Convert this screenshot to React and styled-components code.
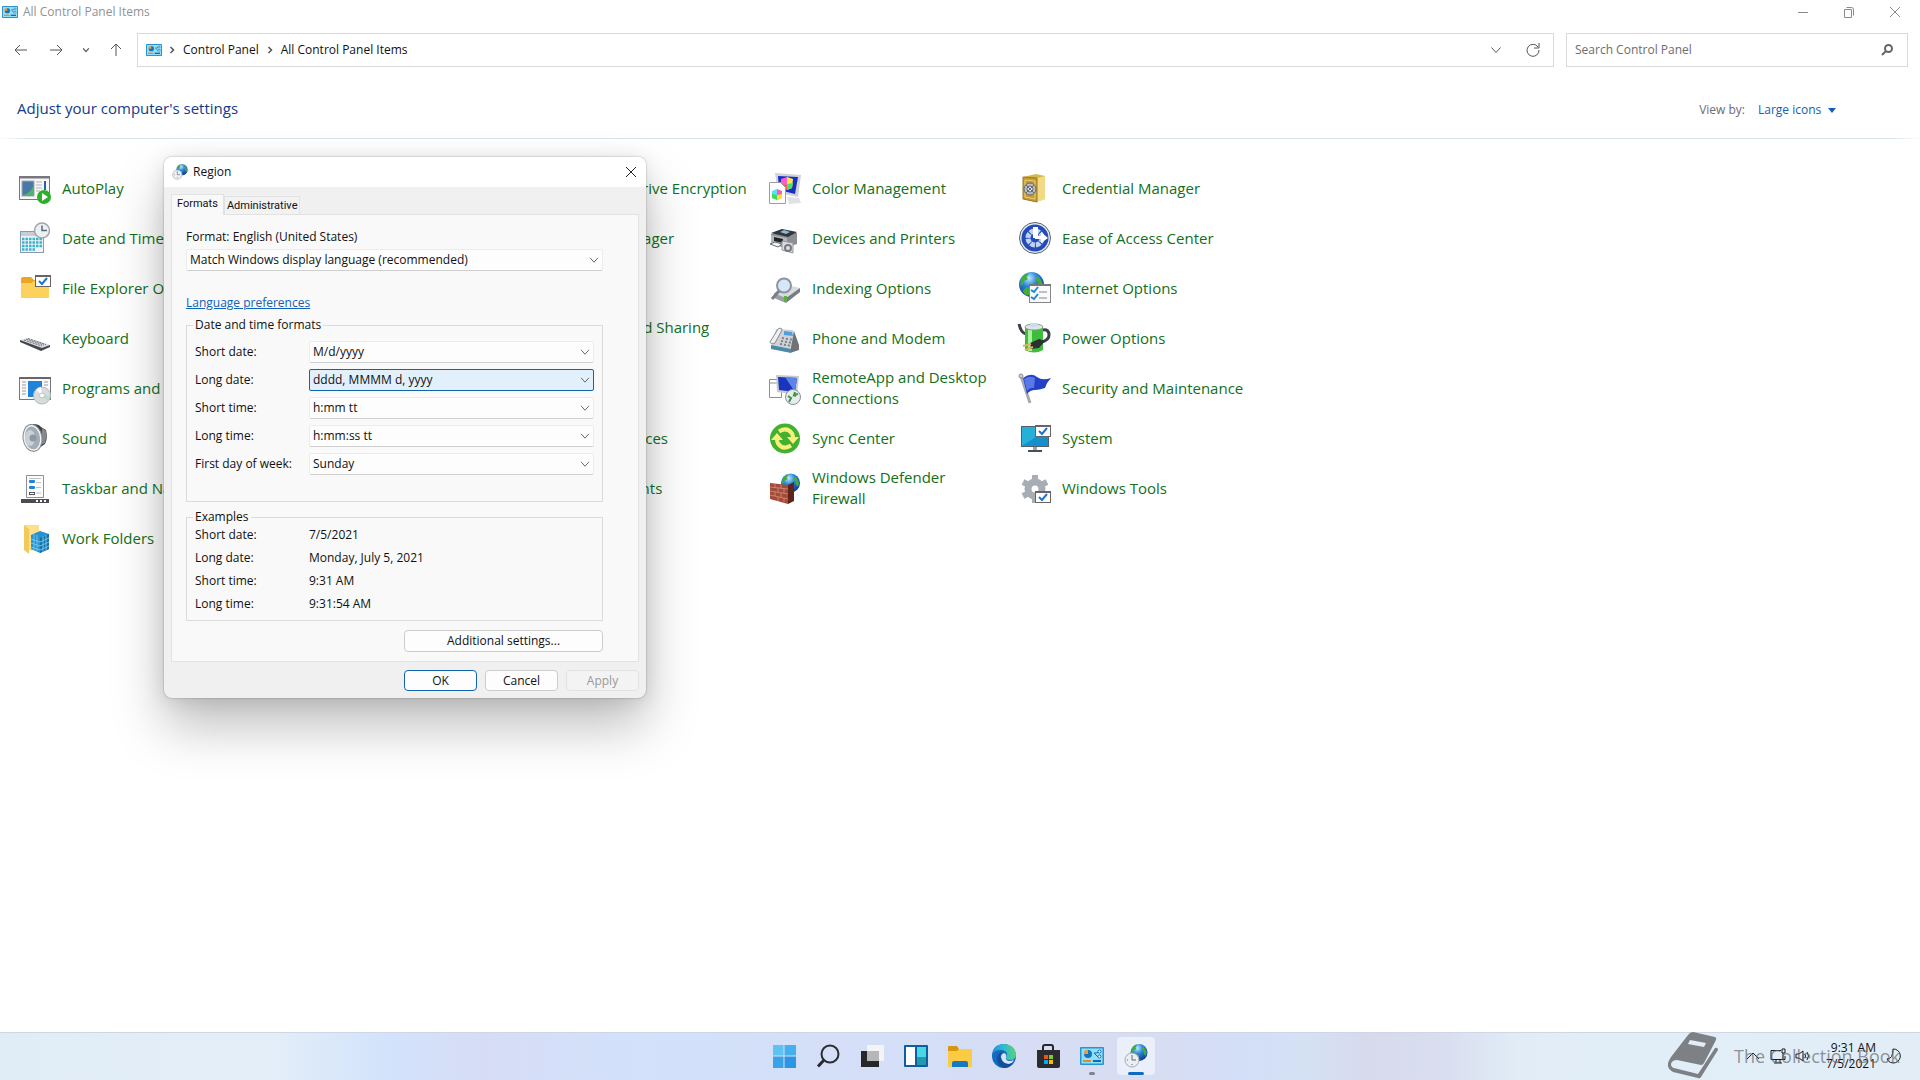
import { useState } from "react";
import styled, { createGlobalStyle, css } from "styled-components";

const GlobalStyle = createGlobalStyle`
  * {
    box-sizing: border-box;
  }

  body {
    margin: 0;
    background: #ffffff;
    color: #111111;
    font-family: "Open Sans", "Noto Sans", sans-serif;
    font-size: 12px;
    line-height: 16px;
  }

  button,
  input,
  select {
    font: inherit;
    color: inherit;
  }

  svg {
    display: block;
    flex-shrink: 0;
    overflow: visible;
  }
`;

/* ---------- small shared drawings ---------- */

function Stroke({ size = 16, width = 1, color = "#555555", d }) {
  return (
    <svg width={size} height={size} viewBox="0 0 16 16" aria-hidden="true">
      <path d={d} fill="none" stroke={color} strokeWidth={width} />
    </svg>
  );
}

const CHEVRON = "M3.500 5.500l4.500 5 4.500-5";
const CROSS = "M3 3l10 10M13 3L3 13";

function CheckCard({ x, y }) {
  return (
    <g transform={`translate(${x} ${y})`}>
      <rect x=".5" y=".5" width="15" height="11" fill="#fff" stroke="#6a6265" />
      <path d="M0 1h16" stroke="#6a6265" strokeWidth="2" />
      <path d="M4 6l3 3 5-6" fill="none" stroke="#1976d2" strokeWidth="2" />
    </g>
  );
}

function Globe({ cx, cy, r }) {
  return (
    <g>
      <defs>
        <radialGradient id={`globe${cx}`} cx=".4" cy=".25" r=".8">
          <stop offset="0" stopColor="#b9ecff" />
          <stop offset=".4" stopColor="#2f86d8" />
          <stop offset="1" stopColor="#0a2f8f" />
        </radialGradient>
      </defs>
      <circle cx={cx} cy={cy} r={r} fill={`url(#globe${cx})`} />
      <g transform={`translate(${cx - r} ${cy - r}) scale(${r / 10})`}>
        <path
          d="M2 5q2-4 6-4l-2 3 1 2-3 1-1 3-2 1zM15 3q3 3 4 7l-1 4-2-2-1-4-2-2zM6 12l4 1-1 4-2 2q-3-1-4-4z"
          fill="#43ad3c"
        />
      </g>
    </g>
  );
}

function ControlPanelIcon({ size = 16 }) {
  return (
    <svg width={size} height={size} viewBox="0 0 24 24" aria-hidden="true">
      <rect x="0" y="3" width="24" height="18" rx="1" fill="#2a93d1" />
      <rect x="1.5" y="4.5" width="21" height="15" fill="#8fe0fb" />
      <circle cx="8" cy="10" r="4" fill="#1773bd" />
      <path d="M8 10V5.500a4.500 4.500 0 0 0-4.500 4.500z" fill="#f39a35" />
      <path d="M14 9h3l2-2M14 9l4 4" fill="none" stroke="#1769ad" />
      <circle cx="19.500" cy="7.500" r="1.500" fill="#fff" stroke="#1769ad" />
      <circle cx="19.500" cy="12.500" r="1.500" fill="#fff" stroke="#1769ad" />
      <path d="M3 17h8" stroke="#e38b2b" strokeWidth="2" />
      <path d="M13 17h8" stroke="#1769ad" strokeWidth="2" />
    </svg>
  );
}

function RegionIcon({ size = 16 }) {
  return (
    <svg width={size} height={size} viewBox="0 0 24 24" aria-hidden="true">
      <Globe cx={15} cy={8.5} r={8.5} />
      <circle cx="8" cy="16" r="7" fill="#eceff2" stroke="#a4abb3" />
      <path d="M8 11v5h4M8 21v-1M3 16h1" fill="none" stroke="#5a6c80" />
    </svg>
  );
}

/* ---------- 32px item icons ---------- */

const ICONS = {
  autoplay: (
    <>
      <rect x=".5" y="4.500" width="30" height="23" fill="#f7f7f7" stroke="#77777d" />
      <path d="M1 5.500h29" stroke="#77777d" strokeWidth="2" />
      <rect x="3" y="9" width="12" height="15" fill="#4a79a8" stroke="#a3abb5" />
      <path d="M4 23q8-2 10-9v9z" fill="#53b36c" />
      <path d="M17 10h6M17 13h6M17 16h6M17 19h4" stroke="#b3b3b8" />
      <path d="M26 9v9" stroke="#285fae" strokeWidth="2" />
      <circle cx="25" cy="25" r="7" fill="#2fae2b" />
      <path d="M23 21v8l6-4z" fill="#fff" />
    </>
  ),
  datetime: (
    <>
      <rect x="1.500" y="9.500" width="23" height="21" fill="#eef4f7" stroke="#8a9aa8" />
      <rect x="2" y="10" width="22" height="4" fill="#c3ced6" />
      <path
        d="M3 17h20M3 20.500h20M3 24h20M3 27.500h14"
        stroke="#38b4cf"
        strokeWidth="2.500"
        strokeDasharray="2.500 1"
      />
      <circle cx="23" cy="8.500" r="7.500" fill="#edf0f2" stroke="#a0a6ac" strokeWidth="1.500" />
      <path d="M23 3.500v5h5" fill="none" stroke="#586b7d" strokeWidth="1.500" />
    </>
  ),
  folder: (
    <g transform="translate(0 3)">
      <path d="M2 4q0-2 2-2h8l3 3h13v10H2z" fill="#eaa622" />
      <path d="M2 8h10l3-2h15v16q0 1-1 1H3q-1 0-1-1z" fill="#fdd25c" />
      <CheckCard x={16} y={0} />
    </g>
  ),
  keyboard: (
    <g transform="translate(0 3)">
      <path d="M1 15l8-2 22 7-8 4z" fill="#d6d9dd" />
      <path d="M1 15l22 8 8-3v2l-9 4-21-9z" fill="#44474c" />
      <path
        d="M5 15l18 6M7 14l18 6M9 13.500l18 6"
        stroke="#6f747b"
        strokeDasharray="2 1"
      />
    </g>
  ),
  programs: (
    <>
      <rect x=".5" y="5.500" width="31" height="22" fill="#fafafa" stroke="#77777d" />
      <path d="M0 6h32" stroke="#66666c" strokeWidth="2" />
      <path d="M3 10h4M3 13h4M3 16h4M3 19h4M3 22h4M25 10h4M25 13h4" stroke="#9a9aa0" />
      <rect x="9" y="9" width="14" height="16" fill="#1f83d8" />
      <circle cx="23" cy="23.500" r="8.500" fill="#d8dcdf" stroke="#b4b9be" />
      <path d="M23 23l-6-5a8 8 0 0 1 5-3z" fill="#fff" />
      <path d="M23 23l5 6a8 8 0 0 0 3-5z" fill="#b9dcc9" />
      <circle cx="23" cy="23.500" r="2.500" fill="#fff" stroke="#bcc0c4" />
    </>
  ),
  sound: (
    <>
      <path d="M14 2q6 0 8 3l5 3q2 8-1 14l-6 4-6 4z" fill="#3f4144" />
      <path d="M23 6l4 3q1 6-1 12l-4 2z" fill="#85888c" />
      <ellipse cx="13.500" cy="16" rx="9.500" ry="13.500" fill="#f1f2f3" stroke="#85898e" transform="rotate(-8 13 16)" />
      <ellipse cx="13.500" cy="16" rx="7.500" ry="11.500" fill="#a3adb6" transform="rotate(-8 13 16)" />
      <ellipse cx="11" cy="16" rx="5" ry="8" fill="#c9d0d6" />
      <circle cx="14" cy="16" r="3.500" fill="#8c98a3" />
    </>
  ),
  taskbar: (
    <g transform="translate(0 3)">
      <path d="M7.500.5h17v22h-17z" fill="#fcfcfc" stroke="#8e8e94" />
      <path d="M10 3.500h12M17 7.500h5M17 12.500h5M17 18h5" stroke="#c2c2c6" />
      <rect x="10" y="5" width="6" height="3" rx="1" fill="#1f83d8" />
      <rect x="10" y="11" width="6" height="3" rx="1" fill="#1f83d8" />
      <rect x="10.500" y="17.500" width="5" height="2" fill="none" stroke="#55555a" />
      <path d="M2 24h28v4H2z" fill="#4c4c55" />
      <path d="M17 26h2M21 26h2M25 26h2" stroke="#fff" strokeWidth="2" />
    </g>
  ),
  work: (
    <g transform="translate(0 2)">
      <path d="M5 1h15v9l-6 17-9-2z" fill="#ffe08a" />
      <path d="M5 1l5 4v25l-5-4z" fill="#f4c95c" />
      <path d="M12 11l9-4 9 3v15l-9 4-9-4z" fill="#2892cf" />
      <path d="M21 14l9-4v15l-9 4z" fill="#1670a8" />
      <path
        d="M12 15l9 3 9-4M12 19l9 3 9-4M12 23l9 3 9-4M15 10v16M18 11v16M24 12v16M27 11v15"
        fill="none"
        stroke="#6fc3ea"
      />
    </g>
  ),
  color: (
    <g transform="translate(0 1)">
      <path d="M6 0l26 2-3 22-20-4z" fill="#cfd3d8" />
      <path d="M9 3l20 1-3 17-16-4z" fill="#1a2fc0" />
      <path d="M18 24l12 1 2 5-12 1z" fill="#dfe1e4" />
      <path d="M12 6l6-2v12l-6-2z" fill="#ff5bd0" />
      <path d="M18 4l6 2-1 9-5 2z" fill="#ffe84a" />
      <path d="M12 11l6 1v5l-6-3z" fill="#ff5d3a" />
      <path d="M18 11l6-1-1 5-5 2z" fill="#4be06a" />
      <path d="M.5 9.500h11l5 5v16H.500z" fill="#fff" stroke="#9d9da3" />
      <path d="M3 18l5-2v11l-5-2z" fill="#56e0ff" />
      <path d="M8 16l5 2v7l-5 2z" fill="#ff5bb0" />
      <path d="M3 21l5 1v5l-5-2z" fill="#3ddc55" />
      <path d="M8 22l5-1v4l-5 2z" fill="#ffdd3b" />
    </g>
  ),
  printer: (
    <g transform="translate(0 1)">
      <path d="M2 11l12-4 14 3v11l-12 4-14-4z" fill="#8b8f94" />
      <path d="M2 10l11-4 15 3-9 5z" fill="#30363e" />
      <path d="M11 9l4-2 6 2-4 2z" fill="#8fbccd" />
      <path d="M2 12l16 3v8L2 20z" fill="#b3b6ba" />
      <path d="M5 14l9 2v4l-9-2z" fill="#202327" />
      <path d="M1 21l5-2 7 2-4 3z" fill="#f4f4f4" stroke="#6a6d71" />
      <path d="M13 18l11 2v10l-11-3z" fill="#dadcdf" stroke="#96999d" />
      <circle cx="19" cy="25" r="4" fill="#777b80" />
      <circle cx="19" cy="25" r="2" fill="#dcdfe2" />
    </g>
  ),
  indexing: (
    <g transform="translate(0 2)">
      <path d="M5 19l13-8 13 3-14 10z" fill="#d7dade" />
      <path d="M5 19l12 5v5L5 24z" fill="#9ba0a6" />
      <path d="M17 24l14-10v4L17 29z" fill="#777c82" />
      <path d="M15 22h3v6h-3z" fill="#58b23c" />
      <circle cx="15" cy="11.500" r="7" fill="#d5e8fb" stroke="#8d959e" strokeWidth="2" />
      <path d="M10 17L3 25" stroke="#7b8087" strokeWidth="3" />
    </g>
  ),
  phone: (
    <g transform="translate(0 1)">
      <path d="M7 6l17 1 6 16-8 6-20-4z" fill="#cfd3d7" />
      <path d="M25 8l5 14v5l-9 3z" fill="#6f7378" />
      <path d="M2 22l20 4v4L2 26z" fill="#4a8aa8" />
      <path d="M9 6q4-2 4 1L6 20q-4 2-5-1z" fill="#eef0f2" stroke="#84898f" />
      <path d="M15 8l8 1 1 4-9-1z" fill="#4f9fe0" />
      <path
        d="M13 15l12 2M12 18l12 2M11 21l12 2"
        stroke="#7d8289"
        strokeWidth="2"
        strokeDasharray="2 2"
      />
    </g>
  ),
  remote: (
    <g transform="translate(0 2)">
      <path d="M.5 5.500h12v18H.500z" fill="#fff" stroke="#8c9096" />
      <path d="M1 9h11" stroke="#8c9096" />
      <path d="M7 1l23 1-2 19-20-3z" fill="#c6cace" />
      <path d="M9 3l19 1-2 14-16-2z" fill="#1b34bd" />
      <path d="M16 3l12 1-2 14z" fill="#5d84e8" />
      <circle cx="24" cy="23" r="7.500" fill="#e9ecee" stroke="#8b9096" />
      <path
        d="M19 22l3 2-2 4M29 20l-4 1 1-3M24 21l3 1"
        fill="none"
        stroke="#3a9940"
        strokeWidth="2"
      />
    </g>
  ),
  sync: (
    <>
      <circle cx="16" cy="16.500" r="15" fill="#43b02f" />
      <path
        d="M10 9.500q8-5 13 2 1 2 1 4M22 23.500q-8 5-13-2-1-2-1-4"
        fill="none"
        stroke="#f7ee7c"
        strokeWidth="4"
      />
      <path d="M18 15h12l-6 7zM14 18H2l6-7z" fill="#f7ee7c" />
    </>
  ),
  firewall: (
    <g transform="translate(0 1)">
      <Globe cx={21.5} cy={10} r={9.5} />
      <path d="M1 10l18 2v19L1 26z" fill="#a34a38" />
      <path d="M19 12l6-3v19l-6 3z" fill="#612419" />
      <path
        d="M1 14l18 2M1 18l18 3M1 22l18 4M6 11v4M12 12v4M9 15v4M15 16v4M6 19v4M12 20v4M9 24v4M15 25v4"
        fill="none"
        stroke="#c98471"
      />
    </g>
  ),
  safe: (
    <>
      <path d="M4 5l13-3 9 2v23l-9 3-13-3z" fill="#d9b648" />
      <path d="M18 6l8-2v23l-8 3z" fill="#f1d985" />
      <path d="M4 5l14 1v24L4 27z" fill="#c49a33" stroke="#9d7a23" />
      <path d="M6 8l10 1v18l-10-2z" fill="none" stroke="#ecd078" />
      <circle cx="11" cy="17" r="6" fill="#b9bcc0" stroke="#66696d" />
      <circle cx="11" cy="17" r="3" fill="#e4e6e8" stroke="#66696d" />
      <path d="M7 13l8 8M15 13l-8 8" stroke="#66696d" />
    </>
  ),
  ease: (
    <>
      <circle cx="16" cy="16" r="15.500" fill="#e8ecf4" stroke="#59616f" />
      <circle cx="16" cy="16" r="13.500" fill="#234cb8" />
      <circle
        cx="16"
        cy="16"
        r="7"
        fill="none"
        stroke="#c3d3f7"
        strokeWidth="5"
        strokeDasharray="4.500 1"
      />
      <path d="M14 5h5v11h-5z" fill="#fff" />
      <path d="M16 14h6v-4l7 6-7 5v-4h-6z" fill="#fff" />
    </>
  ),
  internet: (
    <>
      <Globe cx={12.5} cy={12.5} r={12.5} />
      <rect x="10.500" y="12.500" width="21" height="18" fill="#fafafa" stroke="#86868c" />
      <path d="M10 13h22" stroke="#77777d" strokeWidth="2" />
      <path d="M12 18l3 2 4-5M12 25l3 2 4-5" fill="none" stroke="#1d87d6" strokeWidth="2" />
      <path d="M20 20h8M20 26h8" stroke="#86868c" />
    </>
  ),
  power: (
    <>
      <path d="M0 2q2 9 7 10M24 8q6-1 6 5 0 5-7 7" fill="none" stroke="#3c3f4a" strokeWidth="3" />
      <path d="M6 5h18v23q-9 5-18 0z" fill="#3ebd3c" />
      <path d="M9 6h4v23H9z" fill="#a9f09f" />
      <ellipse cx="15" cy="5" rx="9" ry="3" fill="#dfe6e4" stroke="#8d9a95" />
      <ellipse cx="15" cy="3" rx="4" ry="2" fill="#c6ddf0" />
      <path d="M11 21l9-4 6 2-6 7-8 1z" fill="#2d2f35" />
      <path d="M12 22l-8 2M14 25l-8 3" stroke="#d9b45c" strokeWidth="2" />
    </>
  ),
  flag: (
    <g transform="translate(0 1)">
      <path d="M2 3l9 27" stroke="#a7abb1" strokeWidth="3" />
      <circle cx="2" cy="3" r="2" fill="#d2d5d9" stroke="#85898f" />
      <path d="M4 5q8-6 14-1 5 4 14 1-4 4-6 10-6 2-10 2-5 0-8 4z" fill="#2440c4" />
      <path d="M5 6q6-4 11-1l-1 10q-4-1-7 3z" fill="#5a78ea" />
    </g>
  ),
  system: (
    <g transform="translate(0 3)">
      <rect x="2" y="1" width="28" height="21" fill="#50606c" />
      <path d="M3 2h26v19H3z" fill="#25b0d8" />
      <path d="M3 21L29 4v17z" fill="#1690cc" />
      <path d="M14 22h4v3h-4z" fill="#9aa4ac" />
      <path d="M9 25h14v2H9z" fill="#4a4f55" />
      <CheckCard x={16} y={0} />
    </g>
  ),
  tools: (
    <g transform="translate(1 3)">
      <circle cx="15" cy="14" r="7" fill="none" stroke="#a7adb5" strokeWidth="7" />
      <path
        d="M15 0v5M15 23v5M3 7l4 2M27 7l-4 2M3 21l4-2M27 21l-4-2"
        stroke="#a7adb5"
        strokeWidth="6"
      />
      <CheckCard x={15} y={16} />
    </g>
  ),
};

/* Five items to a row; null leaves a cell of the grid free. */
const ITEMS = [
  ["autoplay", "AutoPlay"],
  null,
  ["safe", "BitLocker Drive Encryption"],
  ["color", "Color Management"],
  ["safe", "Credential Manager"],
  ["datetime", "Date and Time"],
  null,
  ["printer", "Device Manager"],
  ["printer", "Devices and Printers"],
  ["ease", "Ease of Access Center"],
  ["folder", "File Explorer Options"],
  null,
  null,
  ["indexing", "Indexing Options"],
  ["internet", "Internet Options"],
  ["keyboard", "Keyboard"],
  null,
  ["internet", "Network and Sharing Center"],
  ["phone", "Phone and Modem"],
  ["power", "Power Options"],
  ["programs", "Programs and Features"],
  null,
  null,
  ["remote", "RemoteApp and Desktop Connections"],
  ["flag", "Security and Maintenance"],
  ["sound", "Sound"],
  null,
  ["indexing", "Storage Spaces"],
  ["sync", "Sync Center"],
  ["system", "System"],
  ["taskbar", "Taskbar and Navigation"],
  null,
  ["internet", "User Accounts"],
  ["firewall", "Windows Defender Firewall"],
  ["tools", "Windows Tools"],
  ["work", "Work Folders"],
];

const FORMAT_FIELDS = [
  ["shortDate", "Short date:", "M/d/yyyy"],
  ["longDate", "Long date:", "dddd, MMMM d, yyyy"],
  ["shortTime", "Short time:", "h:mm tt"],
  ["longTime", "Long time:", "h:mm:ss tt"],
  ["firstDay", "First day of week:", "Sunday"],
];

const EXAMPLES = [
  ["Short date:", "7/5/2021"],
  ["Long date:", "Monday, July 5, 2021"],
  ["Short time:", "9:31 AM"],
  ["Long time:", "9:31:54 AM"],
];

function Dropdown({ id, value, highlighted }) {
  return (
    <DropdownBox>
      <DropdownSelect id={id} $highlighted={highlighted} defaultValue={value}>
        <option>{value}</option>
      </DropdownSelect>
      <Stroke d={CHEVRON} size={14} />
    </DropdownBox>
  );
}

function RegionDialog() {
  const [tab, setTab] = useState("Formats");

  return (
    <Dialog role="dialog" aria-labelledby="region-title">
      <DialogTitle>
        <RegionIcon />
        <span id="region-title">Region</span>
        <CloseButton aria-label="Close">
          <Stroke d={CROSS} color="#222222" />
        </CloseButton>
      </DialogTitle>
      <DialogBody>
        <Tabs role="tablist">
          {["Formats", "Administrative"].map((name) => (
            <Tab
              key={name}
              role="tab"
              aria-selected={tab === name}
              $active={tab === name}
              onClick={() => setTab(name)}
            >
              {name}
            </Tab>
          ))}
        </Tabs>
        <TabPanel role="tabpanel">
          <FormatLabel htmlFor="format">
            Format: English (United States)
          </FormatLabel>
          <Dropdown
            id="format"
            value="Match Windows display language (recommended)"
          />
          <LanguageLink href="#language">Language preferences</LanguageLink>
          <Group $tall>
            <legend>Date and time formats</legend>
            {FORMAT_FIELDS.map(([id, label, value]) => (
              <FieldRow key={id}>
                <label htmlFor={id}>{label}</label>
                <Dropdown
                  id={id}
                  value={value}
                  highlighted={id === "longDate"}
                />
              </FieldRow>
            ))}
          </Group>
          <Group>
            <legend>Examples</legend>
            <ExampleList>
              {EXAMPLES.map(([label, value]) => (
                <ExampleRow key={label}>
                  <dt>{label}</dt>
                  <dd>{value}</dd>
                </ExampleRow>
              ))}
            </ExampleList>
          </Group>
          <WideButton>Additional settings...</WideButton>
        </TabPanel>
        <DialogFooter>
          <PushButton $primary>OK</PushButton>
          <PushButton>Cancel</PushButton>
          <PushButton disabled>Apply</PushButton>
        </DialogFooter>
      </DialogBody>
    </Dialog>
  );
}

const TASKBAR_APPS = [
  {
    name: "Start",
    icon: (
      <g fill="#2c95e4">
        <path d="M1 1h10.500v10.500H1z" fill="#5cc3f3" />
        <path d="M12.500 1H24v10.500H12.500z" fill="#45b0ee" />
        <path d="M1 12.500h10.500V24H1z" fill="#3aa2e6" />
        <path d="M12.500 12.500H24V24H12.500z" />
      </g>
    ),
  },
  {
    name: "Search",
    icon: (
      <g fill="none" stroke="#2a2c33" strokeWidth="2">
        <circle cx="14" cy="10" r="8.500" />
        <path d="M8 16l-6 6.500" strokeWidth="3" />
      </g>
    ),
  },
  {
    name: "Task view",
    icon: (
      <>
        <path d="M7 1h17v16H7z" fill="#f4f4f4" />
        <path d="M1 7h18v16H1z" fill="#25272b" />
        <path d="M7 7h12v10H7z" fill="#b7b7b9" />
      </>
    ),
  },
  {
    name: "Widgets",
    icon: (
      <>
        <rect width="24" height="22" y="1" rx="1" fill="#0f5f9e" />
        <path d="M2 3h9v18H2z" fill="#fff" />
        <path d="M13 3h9v10h-9z" fill="#46d8e4" />
        <path d="M13 13h9v8h-9z" fill="#2199b0" />
      </>
    ),
  },
  {
    name: "File Explorer",
    icon: (
      <>
        <path d="M0 3q0-1 1-1h8l2 3h12q1 0 1 1v4H0z" fill="#d9960f" />
        <path d="M0 7h9l2-2h13v17q0 1-1 1H1q-1 0-1-1z" fill="#fbcb43" />
        <path d="M4 23v-4q0-2 2-2h12q2 0 2 2v4z" fill="#1878c8" />
      </>
    ),
  },
  {
    name: "Microsoft Edge",
    icon: (
      <>
        <defs>
          <linearGradient id="edge" x1="0" y1=".4" x2="1" y2=".3">
            <stop offset="0" stopColor="#1f8fdc" />
            <stop offset=".5" stopColor="#2fbcd0" />
            <stop offset="1" stopColor="#5fd56c" />
          </linearGradient>
        </defs>
        <circle cx="12" cy="12" r="12" fill="#1769bd" />
        <path
          d="M0 11Q1 0 12 0q11 1 12 10 0 6-6 6-5 0-4-3 1-1 1-3-1-4-6-4-7 0-9 5z"
          fill="url(#edge)"
        />
        <path d="M9 13q0-3 3-4 3 1 2 4-1 3 3 4 3 0 5-1-2 4-6 4-6-1-7-7z" fill="#dbe3fa" />
        <path d="M5 14q0-5 6-6-4 3-2 7 2 5 8 5l4-1q-3 5-9 5-7-2-7-10z" fill="#104f9e" />
      </>
    ),
  },
  {
    name: "Microsoft Store",
    icon: (
      <>
        <path d="M7 7V3q0-2 2-2h6q2 0 2 2v4" fill="none" stroke="#25272b" strokeWidth="2" />
        <path d="M1 6h23v16q0 2-2 2H3q-2 0-2-2z" fill="#2b2b30" />
        <path d="M8 11h4v4H8z" fill="#f1511b" />
        <path d="M13 11h4v4h-4z" fill="#80cc28" />
        <path d="M8 16h4v4H8z" fill="#00adef" />
        <path d="M13 16h4v4h-4z" fill="#fbbc09" />
      </>
    ),
  },
];

function Taskbar() {
  return (
    <TaskbarBar>
      <span />
      <AppButtons>
        {TASKBAR_APPS.map((app) => (
          <AppButton key={app.name} aria-label={app.name}>
            <svg width="24" height="24" viewBox="0 0 24 24" aria-hidden="true">
              {app.icon}
            </svg>
          </AppButton>
        ))}
        <AppButton aria-label="Control Panel" $running>
          <ControlPanelIcon size={24} />
        </AppButton>
        <AppButton aria-label="Region" $running $active>
          <RegionIcon size={24} />
        </AppButton>
      </AppButtons>
      <Tray>
        <TrayButton aria-label="Show hidden icons">
          <Stroke d="M2 11l6-6 6 6" color="#1b1b1b" />
        </TrayButton>
        <TrayButton aria-label="Network">
          <Stroke d="M11 2.500H1v9h14V8M6 12v3M10 12v3M4 15h8M12 1h3v4h-3zM13 5v7" color="#1b1b1b" />
        </TrayButton>
        <TrayButton aria-label="Volume">
          <Stroke d="M1 6h3l4-3v10l-4-3H1zM10 6q1 2 0 4M12 4q3 4 0 8" color="#1b1b1b" />
        </TrayButton>
        <Clock>
          <span>9:31 AM</span>
          <span>7/5/2021</span>
        </Clock>
        <TrayButton aria-label="Focus assist">
          <Stroke d="M8 1a7 7 0 1 1-6 10q6 0 6-10z" color="#1b1b1b" />
        </TrayButton>
      </Tray>
      <Watermark>
        <svg width="52" height="48" viewBox="0 0 52 48" aria-hidden="true">
          <path
            d="M25 0l22 5q2 1 1 3L36 31q-1 2-3 2L9 28q-5 0-6 4 0 3 3 4l24 6 17-26q3-1 3 2L33 45q-1 2-3 1L5 40q-6-3-5-9 1-3 3-6L20 3q2-3 5-3z"
            fill="#7d8186"
          />
          <path d="M22 8l16 3-2 4-16-3z" fill="#e3edf6" />
        </svg>
        <span>The Collection Book</span>
      </Watermark>
    </TaskbarBar>
  );
}

export default function App() {
  return (
    <Desktop>
      <GlobalStyle />
      <TitleBar>
        <ControlPanelIcon />
        <WindowTitle>All Control Panel Items</WindowTitle>
        <WindowButton aria-label="Minimize">
          <Stroke d="M3 8.500h10" color="#8a8a8a" />
        </WindowButton>
        <WindowButton aria-label="Restore">
          <Stroke d="M3.500 5.500h7v8h-7zM5.500 3.500h5q2 0 2 2v6" color="#8a8a8a" />
        </WindowButton>
        <WindowButton aria-label="Close window">
          <Stroke d={CROSS} color="#8a8a8a" />
        </WindowButton>
      </TitleBar>
      <NavBar>
        <NavButtons>
          <IconButton aria-label="Back">
            <Stroke d="M14 8H2M7 3L2 8l5 5" />
          </IconButton>
          <IconButton aria-label="Forward">
            <Stroke d="M2 8h12M9 3l5 5-5 5" />
          </IconButton>
          <IconButton aria-label="Recent locations">
            <Stroke d={CHEVRON} size={10} width={2} />
          </IconButton>
          <IconButton aria-label="Up">
            <Stroke d="M8 14V2M3 7l5-5 5 5" />
          </IconButton>
        </NavButtons>
        <AddressBar>
          <ControlPanelIcon />
          <Stroke d="M6 4l4 4-4 4" size={12} width={2} />
          <Crumb href="#control-panel">Control Panel</Crumb>
          <Stroke d="M6 4l4 4-4 4" size={12} width={2} />
          <Crumb href="#all-items">All Control Panel Items</Crumb>
          <AddressActions>
            <IconButton aria-label="Previous locations">
              <Stroke d={CHEVRON} />
            </IconButton>
            <IconButton aria-label="Refresh">
              <Stroke d="M13 5a6 6 0 1 0 1 3M14 1v5H9" />
            </IconButton>
          </AddressActions>
        </AddressBar>
        <SearchBox>
          <input
            type="text"
            placeholder="Search Control Panel"
            aria-label="Search Control Panel"
          />
          <svg width="14" height="14" viewBox="0 0 14 14" aria-hidden="true">
            <circle cx="8.500" cy="5.500" r="3.500" fill="none" stroke="#666" strokeWidth="2" />
            <path d="M6 8l-4 4" stroke="#666" strokeWidth="2" />
          </svg>
        </SearchBox>
      </NavBar>
      <Header>
        <h1>Adjust your computer's settings</h1>
        <ViewBy>
          <label htmlFor="view-by">View by:</label>
          <ViewSelect>
            <select id="view-by">
              <option>Large icons</option>
            </select>
            <svg width="8" height="5" viewBox="0 0 8 5" aria-hidden="true">
              <path d="M0 0h8L4 5z" fill="#0f5fb8" />
            </svg>
          </ViewSelect>
        </ViewBy>
      </Header>
      <ItemGrid>
        {ITEMS.map((item, index) =>
          item ? (
            <Item key={item[1]} href="#item">
              <svg width="32" height="32" viewBox="0 0 32 32" aria-hidden="true">
                {ICONS[item[0]]}
              </svg>
              <span>{item[1]}</span>
            </Item>
          ) : (
            <span key={index} />
          )
        )}
      </ItemGrid>
      <Taskbar />
      <RegionDialog />
    </Desktop>
  );
}

const plainButton = css`
  display: flex;
  align-items: center;
  justify-content: center;
  padding: 0;
  border: none;
  background: none;
`;

const Desktop = styled.main`
  position: relative;
  display: flex;
  flex-direction: column;
  min-height: 100vh;
`;

const TitleBar = styled.header`
  display: flex;
  align-items: center;
  height: 23px;
  padding: 0 2px;
`;

const WindowTitle = styled.span`
  flex: 1;
  padding-left: 5px;
  color: #929292;
`;

const WindowButton = styled.button`
  ${plainButton}
  width: 46px;
  height: 20px;
`;

const NavBar = styled.nav`
  display: flex;
  margin-top: 10px;
  padding: 0 12px 0 4px;
`;

const NavButtons = styled.div`
  display: grid;
  grid-template-columns: 34px 35px 25px 36px;
`;

const IconButton = styled.button`
  ${plainButton}
  min-width: 16px;
`;

const AddressBar = styled.div`
  display: flex;
  flex: 1;
  align-items: center;
  gap: 4px;
  height: 34px;
  margin: 0 12px 0 3px;
  padding: 0 12px 0 8px;
  border: 1px solid #d9d9d9;
`;

const Crumb = styled.a`
  padding: 0 1px;
  color: #111111;
  text-decoration: none;
`;

const AddressActions = styled.div`
  display: flex;
  gap: 21px;
  margin-left: auto;
`;

const SearchBox = styled.div`
  display: flex;
  align-items: center;
  width: 342px;
  height: 34px;
  padding: 0 13px 0 8px;
  border: 1px solid #d9d9d9;

  input {
    flex: 1;
    min-width: 0;
    padding: 0;
    border: none;
    outline: none;
    background: none;
  }

  input::placeholder {
    color: #6d6d6d;
    opacity: 1;
  }
`;

const Header = styled.div`
  display: flex;
  align-items: baseline;
  justify-content: space-between;
  height: 72px;
  padding: 31px 84px 0 17px;
  border-bottom: 1px solid;
  border-image: linear-gradient(
      to right,
      transparent,
      #d8e3ee 30px,
      #d8e3ee calc(100% - 30px),
      transparent
    )
    1;

  h1 {
    margin: 0;
    color: #123a8c;
    font-size: 15px;
    font-weight: 400;
    line-height: 20px;
  }
`;

const ViewBy = styled.div`
  display: flex;
  gap: 13px;
  color: #6b6b78;
`;

const ViewSelect = styled.span`
  display: flex;
  align-items: center;
  gap: 6px;

  select {
    padding: 0;
    border: none;
    background: none;
    color: #0f5fb8;
    appearance: none;
  }
`;

const ItemGrid = styled.section`
  display: grid;
  flex: 1;
  grid-template-columns: repeat(5, 250px);
  grid-auto-rows: 50px;
  padding-top: 24px;
`;

const Item = styled.a`
  display: flex;
  align-items: center;
  gap: 11px;
  padding-left: 19px;
  color: #137020;
  font-size: 15px;
  line-height: 21px;
  text-decoration: none;

  span {
    width: 186px;
  }
`;

const Dialog = styled.section`
  position: absolute;
  top: 157px;
  left: 164px;
  width: 482px;
  overflow: hidden;
  border-radius: 8px;
  background: #f0f0f0;
  box-shadow:
    0 0 2px rgba(0, 0, 0, 0.35),
    0 2px 20px rgba(0, 0, 0, 0.1),
    0 28px 52px rgba(0, 0, 0, 0.26);
`;

const DialogTitle = styled.header`
  display: flex;
  align-items: center;
  gap: 5px;
  height: 30px;
  padding: 0 7px 0 8px;
  background: #ffffff;
`;

const CloseButton = styled.button`
  ${plainButton}
  margin-left: auto;
`;

const DialogBody = styled.div`
  padding: 7px;
`;

const Tabs = styled.div`
  display: flex;
  align-items: flex-end;
  height: 20px;
`;

const Tab = styled.button`
  height: ${(props) => (props.$active ? "21px" : "18px")};
  margin-bottom: ${(props) => (props.$active ? "-1px" : "0")};
  padding: ${(props) => (props.$active ? "0 5px 2px" : "0 2px")};
  border: 1px solid #e2e2e2;
  border-bottom: none;
  background: ${(props) => (props.$active ? "#f9f9f9" : "#f2f2f2")};
  font-family: "Roboto", "Open Sans", sans-serif;
  font-size: 11px;
`;

const TabPanel = styled.div`
  display: flex;
  flex-direction: column;
  padding: 14px 35px 9px 14px;
  border: 1px solid #e2e2e2;
  background: #f9f9f9;
`;

const FormatLabel = styled.label`
  margin-bottom: 4px;
`;

const LanguageLink = styled.a`
  align-self: flex-start;
  margin: 24px 0 6px;
  color: #0f62bd;
`;

const DropdownBox = styled.div`
  display: grid;
  align-items: center;

  > * {
    grid-area: 1 / 1;
  }

  > svg {
    justify-self: end;
    margin-right: 2px;
    pointer-events: none;
  }
`;

const DropdownSelect = styled.select`
  width: 100%;
  height: 22px;
  padding: 0 20px 0 3px;
  border: 1px solid #ececec;
  border-bottom-color: #cfcfcf;
  border-radius: 2px;
  background: #fdfdfd;
  appearance: none;

  ${(props) =>
    props.$highlighted &&
    css`
      border-color: #0f64ad;
      background: #e2f0fb;
    `}
`;

const Group = styled.fieldset`
  display: flex;
  flex-direction: column;
  gap: 6px;
  min-width: 0;
  margin: 0 0 7px;
  padding: ${(props) => (props.$tall ? "8px 8px 26px 6px" : "0 8px 5px 6px")};
  border: 1px solid #dcdcdc;

  legend {
    padding: 0 2px;
  }
`;

const FieldRow = styled.div`
  display: grid;
  grid-template-columns: 114px 1fr;
  align-items: center;
  padding-left: 2px;
`;

const ExampleList = styled.dl`
  margin: -2px 0 0;
`;

const ExampleRow = styled.div`
  display: grid;
  grid-template-columns: 114px 1fr;
  padding-left: 2px;
  line-height: 23px;

  dd {
    margin: 0;
  }
`;

const PushButton = styled.button`
  width: 73px;
  height: 21px;
  padding: 0;
  border: 1px solid ${(props) => (props.$primary ? "#0f64ad" : "#cccccc")};
  border-radius: 4px;
  background: #fdfdfd;
  font-size: 12px;

  &:disabled {
    border-color: #e2e2e2;
    background: #f3f3f3;
    color: #9a9a9a;
  }
`;

const WideButton = styled(PushButton)`
  align-self: flex-end;
  width: 199px;
  height: 22px;
  margin-top: 2px;
`;

const DialogFooter = styled.footer`
  display: flex;
  justify-content: flex-end;
  gap: 8px;
  padding-top: 8px;
`;

const TaskbarBar = styled.footer`
  position: relative;
  display: grid;
  grid-template-columns: 1fr auto 1fr;
  align-items: center;
  height: 48px;
  box-shadow: inset 0 1px 0 #d0d7e4;
  background: linear-gradient(
    to right,
    #e1edf6 0%,
    #e3eef8 14%,
    #d3e3fb 20%,
    #d6dcf6 25%,
    #d3e1fa 33%,
    #d5def6 50%,
    #d8ddf1 59%,
    #d3def8 65%,
    #d5e1f4 68%,
    #d7daed 71%,
    #d8ddef 75%,
    #e1ecf6 79%,
    #e1eef8 86%,
    #e2edf6 100%
  );
`;

const AppButtons = styled.div`
  display: flex;
  gap: 6px;
`;

const AppButton = styled.button`
  ${plainButton}
  position: relative;
  width: 38px;
  height: 38px;
  border-radius: 4px;
  background: ${(props) => (props.$active ? "#ebeffa" : "none")};

  &::after {
    content: ${(props) => (props.$running ? '""' : "none")};
    position: absolute;
    bottom: 0;
    left: calc(50% - ${(props) => (props.$active ? "8px" : "3px")});
    width: ${(props) => (props.$active ? "16px" : "6px")};
    height: 3px;
    border-radius: 2px;
    background: ${(props) => (props.$active ? "#0f6cc0" : "#80848e")};
  }
`;

const Tray = styled.div`
  display: flex;
  align-items: center;
  justify-content: flex-end;
  gap: 9px;
  padding-right: 19px;
`;

const TrayButton = styled.button`
  ${plainButton}
`;

const Clock = styled.time`
  display: flex;
  flex-direction: column;
  width: 56px;
  text-align: right;
`;

const Watermark = styled.div`
  position: absolute;
  right: 20px;
  bottom: 0;
  display: flex;
  align-items: center;
  gap: 14px;
  color: rgba(100, 104, 110, 0.7);
  font-size: 18px;
  pointer-events: none;
`;
